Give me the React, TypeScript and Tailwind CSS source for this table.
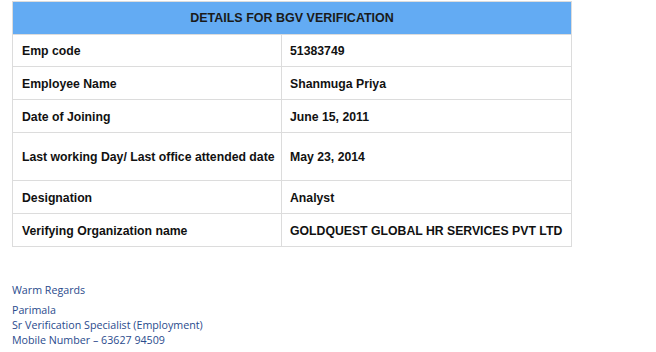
import React from "react";

const rows: { label: string; value: string; h: string }[] = [
  { label: "Emp code", value: "51383749", h: "h-[32px]" },
  { label: "Employee Name", value: "Shanmuga Priya", h: "h-[33px]" },
  { label: "Date of Joining", value: "June 15, 2011", h: "h-[33px]" },
  { label: "Last working Day/ Last office attended date", value: "May 23, 2014", h: "h-[48px]" },
  { label: "Designation", value: "Analyst", h: "h-[33px]" },
  { label: "Verifying Organization name", value: "GOLDQUEST GLOBAL HR SERVICES PVT LTD", h: "h-[33px]" },
];

export default function App() {
  return (
    <div className="w-[656px] h-[352px] bg-white overflow-hidden pt-px pl-3">
      <div
        className="w-[560px] border border-[#dcdcdc] text-[12.25px] font-bold text-[#111]"
        style={{ fontFamily: '"Liberation Sans", Arial, sans-serif' }}
      >
        <div className="h-[32px] bg-[#63abf3] flex items-center justify-center text-[12.5px] text-[#1a1a1a]">
          DETAILS FOR BGV VERIFICATION
        </div>
        {rows.map((r) => (
          <div key={r.label} className={`flex border-t border-[#dcdcdc] ${r.h}`}>
            <div className="w-[269px] border-r border-[#dcdcdc] flex items-center pl-[9px] pt-[2px]">
              {r.label}
            </div>
            <div className="flex-1 flex items-center pl-[8px] pt-[2px]">{r.value}</div>
          </div>
        ))}
      </div>
      <div
        className="mt-[36px] text-[10.7px] leading-[15px] text-[#2a4b8d]"
        style={{ fontFamily: '"Open Sans", "DejaVu Sans", sans-serif' }}
      >
        <div>Warm Regards</div>
        <div className="mt-[5px]">Parimala</div>
        <div>Sr Verification Specialist (Employment)</div>
        <div>Mobile Number – 63627 94509</div>
      </div>
    </div>
  );
}
